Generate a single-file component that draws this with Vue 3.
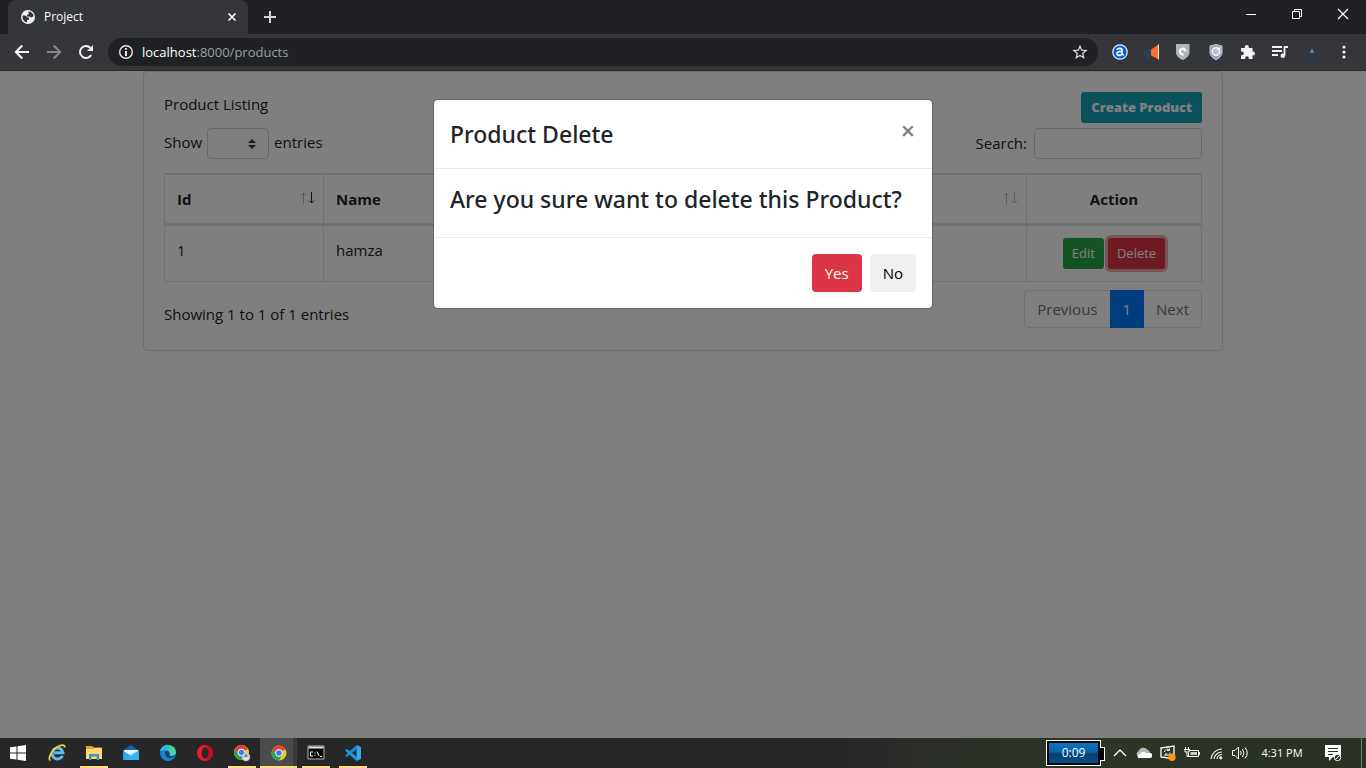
<script setup>
import { ref } from 'vue'

const search = ref('')
const products = [{ id: 1, name: 'hamza' }]
</script>

<template>
  <div class="screen">
    <header class="browser">
      <div class="tabstrip">
        <div class="tab">
          <svg class="globe" width="16" height="16" viewBox="0 0 16 16">
            <circle cx="8" cy="8" r="7" fill="#f1f3f4" />
            <path d="M2.500 6.500H5.500L7.500 8.500H9V10.500L7 11.500V13.300C4 13 2.300 10.500 2.500 6.500ZM8 2.700H10.500C12.500 3.700 13.500 5.500 13.500 7.500L11 8.500 9.500 7.500H7V6L9 5Z" fill="#35363a" />
          </svg>
          <span class="tab-title">Project</span>
          <button class="tab-close" aria-label="Close tab">
            <svg width="10" height="10" viewBox="0 0 10 10"><path d="M1.500 1.500 8.500 8.500M8.500 1.500 1.500 8.500" stroke="#fff" stroke-width="1.700" /></svg>
          </button>
        </div>
        <button class="new-tab" aria-label="New tab">
          <svg width="14" height="14" viewBox="0 0 14 14"><path d="M7 1V13M1 7H13" stroke="#d5d7da" stroke-width="2" /></svg>
        </button>
        <div class="window-controls">
          <button aria-label="Minimize"><svg width="12" height="12" viewBox="0 0 12 12"><path d="M1 6.500H11" stroke="#fff" /></svg></button>
          <button aria-label="Restore"><svg width="12" height="12" viewBox="0 0 12 12" fill="none" stroke="#fff"><path d="M1.500 3.500H8.500V10.500H1.500ZM3.500 3V1.500H10.500V8.500H9" /></svg></button>
          <button aria-label="Close window"><svg width="12" height="12" viewBox="0 0 12 12"><path d="M1 1 11 11M11 1 1 11" stroke="#fff" stroke-width="1.200" /></svg></button>
        </div>
      </div>

      <div class="toolbar">
        <button class="tool" aria-label="Back"><svg width="16" height="16" viewBox="0 0 16 16" fill="none" stroke="#f1f3f4" stroke-width="2"><path d="M15 8H2M8.300 1.500 1.800 8 8.300 14.500" /></svg></button>
        <button class="tool" aria-label="Forward"><svg width="16" height="16" viewBox="0 0 16 16" fill="none" stroke="#85868a" stroke-width="2"><path d="M1 8H14M7.700 1.500 14.200 8 7.700 14.500" /></svg></button>
        <button class="tool" aria-label="Reload"><svg width="16" height="16" viewBox="0 0 16 16"><path d="M13.200 11A6 6 0 1 1 12.300 3.800" fill="none" stroke="#f1f3f4" stroke-width="2" /><path d="M15 1V7H9Z" fill="#f1f3f4" /></svg></button>
        <div class="omnibox">
          <svg width="16" height="16" viewBox="0 0 16 16"><circle cx="8" cy="8" r="6.300" fill="none" stroke="#e8eaed" stroke-width="1.400" /><path d="M8 7V12M8 4V5.700" stroke="#fff" stroke-width="1.800" /></svg>
          <span class="url"><b>localhost</b>:8000/products</span>
          <button class="star" aria-label="Bookmark"><svg width="16" height="16" viewBox="0 0 16 16"><path d="M8 2.200 9.700 6.200 14 6.600 10.700 9.400 11.700 13.600 8 11.400 4.300 13.600 5.300 9.400 2 6.600 6.300 6.200Z" fill="none" stroke="#d5d7da" stroke-width="1.300" /></svg></button>
        </div>
        <div class="extensions">
          <button class="tool" aria-label="Alexa"><svg width="16" height="16" viewBox="0 0 16 16"><circle cx="8" cy="8" r="7.200" fill="#0d5fd0" stroke="#e8f1fb" stroke-width="1.200" /><path d="M5 5.800C5.800 3.900 10 3.700 10 6.300V10.500L11.800 11M10 7.300C7.400 7.200 5 7.900 5 9.700 5 12 9.200 11.800 10 9.700" fill="none" stroke="#fff" stroke-width="1.600" /></svg></button>
          <button class="tool" aria-label="Announcements"><svg width="16" height="16" viewBox="0 0 16 16"><path d="M0 7 7 5V12H5L5.500 15H3L2 12 0 11Z" fill="#24415e" /><path d="M7 5.500 14 1V15L7 11.500Z" fill="#ff6b35" /><path d="M14.500 0.500V15.500" stroke="#d6e7f3" /></svg></button>
          <button class="tool" aria-label="Guard"><svg width="16" height="16" viewBox="0 0 16 16"><path d="M0 0H13.500V8C13.500 12 10 14.500 6.800 16 3 14.500 0 12 0 8Z" fill="#b0b4bd" /><path d="M9.500 7.500A2.800 2.800 0 1 0 7.500 10.200" fill="none" stroke="#fff" stroke-width="2.200" /></svg></button>
          <button class="tool" aria-label="Privacy shield"><svg width="16" height="16" viewBox="0 0 16 16"><path d="M8 0.500 14 2V8C14 12 11.500 14 8 15.700 4.500 14 2 12 2 8V2Z" fill="#9da7b7" stroke="#bdc5d0" /><circle cx="8" cy="7.500" r="3.800" fill="#b8c1cd" stroke="#eef0f5" stroke-width="1.500" /><path d="M9.500 6 12 3.500" stroke="#fff" stroke-width="1.500" /></svg></button>
          <button class="tool" aria-label="Extensions"><svg width="16" height="16" viewBox="0 0 16 16"><path d="M1 4H4.800V3A2 2 0 0 1 8.800 3V4H12.500V7.500H13A2 2 0 0 1 13 11.500H12.500V15H8.800V14A1.800 1.800 0 0 0 5.200 14V15H1V11.200H2A1.800 1.800 0 0 0 2 7.600H1Z" fill="#f1f3f4" /></svg></button>
          <button class="tool" aria-label="Media"><svg width="16" height="16" viewBox="0 0 16 16"><path d="M0 3H10M0 7H10M0 11H6M12.500 2.800V11.500M12 3H16" stroke="#f1f3f4" stroke-width="1.800" /><circle cx="10.800" cy="11.800" r="2.300" fill="#f1f3f4" /></svg></button>
          <button class="tool" aria-label="Profile"><svg width="16" height="16" viewBox="0 0 16 16"><path d="M0 10.500H16" stroke="#203f5e" /><path d="M5.500 9 8 4 10.500 9Z" fill="#24598a" /><path d="M8 5.500V7.500M6.500 8.500 8 7.500 9.500 8.500" fill="none" stroke="#7dabd2" /></svg></button>
          <button class="tool" aria-label="Menu"><svg width="16" height="16" viewBox="0 0 16 16" fill="#f1f3f4"><circle cx="8" cy="3" r="1.600" /><circle cx="8" cy="8" r="1.600" /><circle cx="8" cy="13" r="1.600" /></svg></button>
        </div>
      </div>
    </header>

    <main class="page">
      <section class="card">
        <div class="row">
          <span>Product Listing</span>
          <button class="btn small info">Create Product</button>
        </div>
        <div class="row controls">
          <label class="length"><span>Show</span>
            <span class="select-wrap">
              <select aria-label="Entries per page"><option></option></select>
              <svg width="8" height="10" viewBox="0 0 8 10"><path d="M0 4 4 0 8 4ZM0 6H8L4 10Z" fill="#343a40" /></svg>
            </span>
            <span>entries</span></label>
          <label class="search">Search: <input v-model="search" type="search" /></label>
        </div>
        <table>
          <thead>
            <tr>
              <th class="col-id">
                <div class="head">Id
                  <svg class="sort" width="16" height="12" viewBox="0 0 16 12" fill="none" stroke="#212529"><path d="M3.500 12V1M1 3.500 3.500 1 6 3.500" opacity=".3" /><path d="M11.500 0V11M9 8.500 11.500 11 14 8.500" /></svg>
                </div>
              </th>
              <th>
                <div class="head">Name
                  <svg class="sort" width="16" height="12" viewBox="0 0 16 12" fill="none" stroke="#212529" opacity=".3"><path d="M3.500 12V1M1 3.500 3.500 1 6 3.500" /><path d="M11.500 0V11M9 8.500 11.500 11 14 8.500" /></svg>
                </div>
              </th>
              <th class="col-action">Action</th>
            </tr>
          </thead>
          <tbody>
            <tr v-for="p in products" :key="p.id">
              <td>{{ p.id }}</td>
              <td>{{ p.name }}</td>
              <td class="col-action">
                <div class="actions">
                  <button class="btn small success">Edit</button>
                  <button class="btn small danger focused">Delete</button>
                </div>
              </td>
            </tr>
          </tbody>
        </table>
        <div class="row footer">
          <span class="summary">Showing 1 to 1 of 1 entries</span>
          <nav class="pagination">
            <a href="#">Previous</a><a href="#" class="current">1</a><a href="#">Next</a>
          </nav>
        </div>
      </section>

      <div class="backdrop">
        <div class="modal" role="dialog" aria-labelledby="dialog-title">
          <div class="modal-header">
            <h4 id="dialog-title">Product Delete</h4>
            <button class="dismiss" aria-label="Close">×</button>
          </div>
          <div class="modal-body"><h4>Are you sure want to delete this Product?</h4></div>
          <div class="modal-footer">
            <button class="btn danger">Yes</button>
            <button class="btn plain">No</button>
          </div>
        </div>
      </div>
    </main>

    <footer class="taskbar">
      <button class="start" aria-label="Start"><svg width="16" height="16" viewBox="0 0 16 16" fill="#fff"><path d="M0 2.300 6.500 1.400V7.500H0ZM7.500 1.200 16 0V7.500H7.500ZM0 8.500H6.500V14.600L0 13.700ZM7.500 8.500H16V16L7.500 14.800Z" /></svg></button>
      <button class="app" aria-label="Internet Explorer"><svg width="18" height="18" viewBox="0 0 18 18" fill="none"><path d="M14.500 11.800A5.500 5.500 0 1 1 15 8.800H6" stroke="#5dbdf0" stroke-width="3" /><path d="M2.500 16.500C-1 15 4 6 9 3 13 .5 17 .2 16.700 3.500" stroke="#f7cd32" stroke-width="1.800" /></svg></button>
      <button class="app open" aria-label="File Explorer"><svg width="18" height="18" viewBox="0 0 18 18"><path d="M1 2H7L9 3.500H17V15H1Z" fill="#e5a51f" /><path d="M1 5H8L9 4H17V15H1Z" fill="#ffd96b" /><path d="M4 16V10H14V16H11.500V12.500H6.500V16Z" fill="#3d90d6" /></svg></button>
      <button class="app" aria-label="Mail"><svg width="18" height="18" viewBox="0 0 18 18"><path d="M1 6.500 9 1 17 6.500V16H1Z" fill="#1066ad" /><path d="M2 6H16V12H2Z" fill="#eef5fa" /><path d="M1 6.500 9 12 17 6.500V16H1Z" fill="#2aa5e8" /><path d="M1 16 9 9.500 17 6.500V16Z" fill="#43bdf4" opacity=".5" /></svg></button>
      <button class="app" aria-label="Edge"><svg width="18" height="18" viewBox="0 0 18 18"><circle cx="9" cy="9" r="8" fill="#1584d8" /><path d="M1.300 7C3-.5 17-1 17 8.500 16.500 12 12 12.500 10.500 11 12.500 8 8 4 1.300 7Z" fill="#45d4a2" /><path d="M1.300 7C2.500 1 9-.5 12 2 10 3 10 5 9 6 6 4.800 4 5.500 1.300 7Z" fill="#30b7de" /><path d="M6 8C7 6 11 7 10.500 10 10 13 14 13 16.500 11 13 16 6 15 6 8Z" fill="#153e73" /></svg></button>
      <button class="app" aria-label="Opera"><svg width="18" height="18" viewBox="0 0 18 18"><circle cx="9" cy="9" r="8" fill="#ef1b2d" /><path d="M9 1A8 8 0 0 1 9 17C13 15 13 3 9 1Z" fill="#c30d20" /><ellipse cx="9" cy="9" rx="3.400" ry="5.800" fill="#272727" /></svg></button>
      <button class="app open" aria-label="Chrome, guest profile"><svg width="18" height="18" viewBox="0 0 18 18"><circle cx="8.500" cy="8.500" r="7.500" fill="#f5c431" /><path d="M2 4.750A7.500 7.500 0 0 1 15 4.750L8.500 8.500 5.300 10.400Z" fill="#df4537" /><path d="M2 4.750A7.500 7.500 0 0 0 8.500 16L11.700 10.400H5.300Z" fill="#29a454" /><circle cx="8.500" cy="8.500" r="3.400" fill="#3e7ee9" stroke="#fff" stroke-width="1" /><circle cx="13" cy="13" r="4.200" fill="#c4cbd1" /><circle cx="13" cy="11.800" r="1.500" fill="#777f88" /><path d="M10.500 15.500C11 12.800 15 12.800 15.500 15.500" fill="#f3f4f5" /></svg></button>
      <button class="app open active" aria-label="Chrome"><svg width="18" height="18" viewBox="0 0 18 18"><circle cx="9" cy="9" r="7.500" fill="#f5c431" /><path d="M2.500 5.250A7.500 7.500 0 0 1 15.500 5.250L9 9 5.800 10.900Z" fill="#df4537" /><path d="M2.500 5.250A7.500 7.500 0 0 0 9 16.500L12.200 10.900H5.800Z" fill="#29a454" /><circle cx="9" cy="9" r="3.400" fill="#3e7ee9" stroke="#fff" stroke-width="1" /></svg></button>
      <button class="app open" aria-label="Command Prompt"><svg width="18" height="16" viewBox="0 0 18 16"><path d="M1 1H17V14H1Z" fill="#050505" stroke="#aeb3b8" /><path d="M1.500 2.500H16.500" stroke="#dfe5e9" stroke-width="2" /><path d="M6 7H3.500V11H6M8 7.500V8.500M8 10V11M10 6.500 12 11M13 11.500H15" fill="none" stroke="#fff" /></svg></button>
      <button class="app open" aria-label="Visual Studio Code"><svg width="18" height="18" viewBox="0 0 18 18"><path d="M12.500 1 17 3V15L12.500 17Z" fill="#35a9ee" /><path d="M12.500 1V5.500L3 13 1 11.500Z" fill="#1589d1" /><path d="M1 6.500 3 5 12.500 12.500V17Z" fill="#1f9be4" /></svg></button>

      <div class="tray">
        <div class="battery">0:09</div>
        <button aria-label="Show hidden icons"><svg width="16" height="16" viewBox="0 0 16 16"><path d="M2 11 8 5 14 11" fill="none" stroke="#fff" stroke-width="1.300" /></svg></button>
        <button aria-label="OneDrive"><svg width="16" height="16" viewBox="0 0 16 16"><path d="M3 12A3.200 3.200 0 0 1 2.500 6 5 5 0 0 1 11 4.500 4 4 0 0 1 14 8L8 12Z" fill="#b5b8b3" /><path d="M2 13A3 3 0 0 1 4 9 4 4 0 0 1 10 8L14 8A2.500 2.500 0 0 1 13.500 13Z" fill="#fff" /></svg></button>
        <button aria-label="Updates"><svg width="18" height="16" viewBox="0 0 18 16"><path d="M2 3 15 1V14L2 12Z" fill="none" stroke="#fff" stroke-width="1.300" /><path d="M5.500 7C6 4 9 3.500 10.500 5V3.500M10.500 5.500H8M11 7.500C10.500 10.500 8 11 6 9.500V11M6 9H8.500" fill="none" stroke="#fff" /><circle cx="13" cy="12.300" r="3.700" fill="#ff9914" /></svg></button>
        <button aria-label="Power"><svg width="16" height="16" viewBox="0 0 16 16" fill="none" stroke="#fff"><path d="M5 5.500H14.500V11.500H4.500V8M15.500 7V10" /><path d="M0 4.500H6M1.500 2V4M4.500 2V4M1 5V7H5V5M3 7V11.500H5" /><path d="M6.500 7H13V10H6.500Z" fill="#c9cec6" stroke="none" /></svg></button>
        <button aria-label="Network"><svg width="16" height="16" viewBox="0 0 16 16" fill="none" stroke="#e8ebe5" stroke-width="1.200"><path d="M3 14A11 11 0 0 1 14 4M6 14A8 8 0 0 1 14 7M9 14A5 5 0 0 1 14 9.500" /><circle cx="12.800" cy="12.800" r="1" fill="#fff" /></svg></button>
        <button aria-label="Volume"><svg width="18" height="16" viewBox="0 0 18 16" fill="none" stroke="#fff"><path d="M1.500 5.500H4L7.500 2V14L4 10.500H1.500ZM9.500 6Q11 8 9.500 10M11.500 4Q14.500 8 11.500 12M14 2.500Q18.500 8 14 13.500" /></svg></button>
        <time>4:31 PM</time>
        <button class="notices" aria-label="Notifications"><svg width="18" height="18" viewBox="0 0 18 18"><path d="M1 1H17V13H9L5 17V13H1Z" fill="#fff" /><path d="M4 4.500H14M4 7.500H14M4 10.500H9" stroke="#2a3226" stroke-width="1.200" /><circle cx="13.500" cy="13.500" r="3.200" fill="#2a3226" stroke="#fff" /><path d="M11.500 15.500 15.500 11.500" stroke="#fff" /></svg></button>
        <button class="show-desktop" aria-label="Show desktop"></button>
      </div>
    </footer>
  </div>
</template>

<style>
body { margin: 0; }
</style>

<style scoped>
* { box-sizing: border-box; }
button, input, select { font: inherit; margin: 0; }
button { border: 0; padding: 0; background: none; color: inherit; cursor: pointer; }
svg { display: block; flex: none; }

.screen {
  min-height: 100vh;
  display: flex;
  flex-direction: column;
  font-family: "Open Sans", "Noto Sans", sans-serif;
  font-size: 15px;
  line-height: 24px;
  color: #212529;
}

/* Browser frame */
.browser { background: #35363a; border-bottom: 1px solid #28292b; color: #fff; font-size: 13px; }
.tabstrip { display: flex; height: 34px; padding-left: 8px; background: #202124; }
.tab {
  display: flex; align-items: center; width: 240px; padding: 0 11px 0 12px;
  background: #35363a; border-radius: 8px 8px 0 0; font-size: 12px;
}
.tab-title { flex: 1; margin-left: 8px; }
.new-tab { display: flex; align-items: center; padding: 0 15px; }
.window-controls { display: flex; margin-left: auto; height: 28px; }
.window-controls button { width: 46px; display: flex; align-items: center; justify-content: center; }
.toolbar { display: flex; align-items: center; height: 36px; padding: 0 6px; }
.tool { width: 32px; height: 32px; display: flex; align-items: center; justify-content: center; }
.omnibox {
  flex: 1; display: flex; align-items: center; height: 28px; margin: 0 6px; padding: 0 10px;
  border-radius: 14px; background: #202124;
}
.url { flex: 1; margin-left: 8px; color: #9aa0a6; }
.url b { font-weight: 400; color: #fff; }
.extensions { display: flex; }

/* Product listing */
.page { flex: 1; position: relative; background: #fff; }
.card { max-width: 1080px; margin: 0 auto; padding: 20px; border: 1px solid #dfdfdf; border-radius: 4px; }
.row { display: flex; justify-content: space-between; }
.controls { margin: 5px 0 14px; }
.length, .search { display: flex; gap: 5px; line-height: 28px; }
.search { gap: 7px; line-height: 30px; }
.select-wrap { position: relative; display: flex; }
.select-wrap svg { position: absolute; right: 13px; top: 11px; pointer-events: none; }
select { appearance: none; width: 62px; height: 31px; border: 1px solid #ced4da; border-radius: 4px; background: #fff; }
input { width: 168px; height: 31px; border: 1px solid #ced4da; border-radius: 4px; background: #fff; padding: 4px 8px; }

.btn { padding: 7px 13px; border-radius: 4px; line-height: 24px; }
.small { height: 31px; padding: 5px 9px; font-size: 13px; line-height: 21px; border-radius: 3px; color: #fff; }
.info { padding: 5px 10px; background: #17a2b8; font-weight: 800; }
.success { background: #28a745; }
.danger { background: #dc3545; color: #fff; }
.plain { background: #efefef; color: #000; }
.focused { box-shadow: 0 0 0 3px rgba(225, 83, 97, .5); }

table { width: 100%; border-collapse: separate; border-spacing: 0; border: 1px solid #dee2e6; table-layout: fixed; }
th, td { padding: 12px; border-top: 1px solid #dee2e6; border-right: 1px solid #dee2e6; text-align: left; vertical-align: top; }
th:last-child, td:last-child { border-right: 0; }
th { border-bottom: 2px solid #dee2e6; font-weight: 700; }
.col-id { width: 159px; }
.col-action { width: 174px; text-align: center; }
.head { display: flex; justify-content: space-between; }
.sort { margin: 5px -5px 0 0; }
.actions { display: flex; justify-content: center; gap: 4px; }
.footer { margin-top: 8px; }
.summary { padding-top: 12px; }
.pagination { display: flex; height: 38px; margin-bottom: 2px; border: 1px solid #dee2e6; border-radius: 4px; }
.pagination a { padding: 6px 12px; color: #6c757d; text-decoration: none; }
.pagination .current { margin: -1px 0; padding: 7px 13px; background: #007bff; color: #fff; }

/* Dialog */
.backdrop { position: absolute; inset: 0; padding-top: 28px; background: rgba(0, 0, 0, .5); }
.modal { max-width: 500px; margin: 0 auto; background: #fff; background-clip: padding-box; border: 1px solid rgba(0, 0, 0, .2); border-radius: 5px; }
.modal h4 { margin: 0; font-family: "Noto Sans", "Open Sans", sans-serif; font-size: 23px; line-height: 29px; font-weight: 500; }
.modal-header { display: flex; justify-content: space-between; padding: 20px 16px 19px; border-bottom: 1px solid #e9ecef; }
.dismiss { height: 20px; padding-right: 1px; font-size: 25px; line-height: 18px; font-weight: 600; color: #7f7f7f; }
.modal-body { padding: 16px 16px 23px; }
.modal-footer { display: flex; justify-content: flex-end; gap: 8px; padding: 16px; border-top: 1px solid #e9ecef; }

/* Taskbar */
.taskbar {
  display: flex; height: 30px; color: #fff; font-size: 12px;
  background: linear-gradient(90deg, #272727 0%, #272727 62%, #2e3628 77%, #293124 100%);
}
.start { width: 38px; padding-left: 10px; }
.app { position: relative; width: 37px; display: flex; align-items: center; justify-content: center; }
.app.open::after { content: ""; position: absolute; left: 5px; right: 4px; bottom: 0; height: 2px; background: #ffdc85; }
.app.active { background: #4b4b4b; border-right: 4px solid #3b3b3b; padding-left: 5px; }
.app.active::after { left: 0; right: -4px; }
.tray { display: flex; align-items: center; margin-left: auto; }
.tray button { width: 24px; height: 30px; display: flex; align-items: center; justify-content: center; }
.battery {
  position: relative; width: 55px; height: 26px; margin-right: 7px; border: 1px solid #fff; outline: 2px solid #080808; outline-offset: -3px;
  background: linear-gradient(#1176c6, #0a63a8 45%, #063f70 55%, #06518c); text-align: center;
}
.battery::after { content: ""; position: absolute; left: 53px; top: 6px; width: 4px; height: 12px; background: #000; border: 1px solid #fff; border-left: 0; }
.tray time { width: 60px; text-align: center; font-size: 11px; }
.tray .notices { width: 42px; }
.tray .show-desktop { width: 5px; margin-left: 7px; border-left: 1px solid #777c73; }
</style>
